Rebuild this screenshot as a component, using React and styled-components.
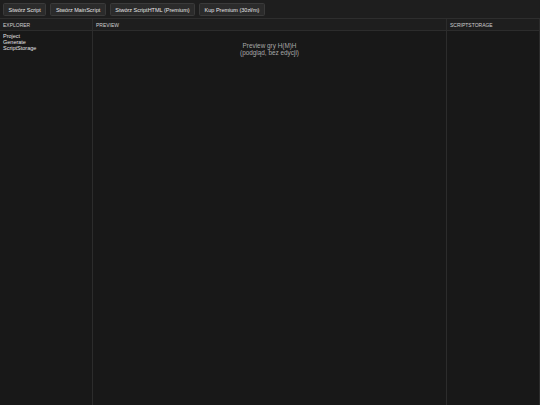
import React from "react"
import styled, { createGlobalStyle } from "styled-components"

const GlobalStyle = createGlobalStyle`
  html, body {
    margin: 0;
    padding: 0;
    background: #181818;
  }
  body {
    font-family: "Liberation Sans", Arial, sans-serif;
    color: #ddd;
  }
`

const Page = styled.div`
  display: flex;
  flex-direction: column;
  width: 540px;
  height: 405px;
  overflow: hidden;
`

const Toolbar = styled.div`
  display: flex;
  align-items: center;
  gap: 4px;
  height: 18px;
  padding: 0 3px;
  background: #1e1e1e;
  border-bottom: 1px solid #2e2e2e;
`

const ToolButton = styled.button`
  height: 13px;
  padding: 0 4.5px;
  margin-top: 1px;
  font-family: inherit;
  font-size: 5.5px;
  color: #e6e6e6;
  background: #2b2b2b;
  border: 1px solid #3a3a3a;
  border-radius: 1.5px;
  cursor: pointer;
`

const Workspace = styled.div`
  flex: 1;
  display: grid;
  grid-template-columns: 93px 1fr 93px;
  min-height: 0;
`

const Panel = styled.section`
  display: flex;
  flex-direction: column;
  background: #181818;
  border-right: 1px solid #2c2c2c;
  min-width: 0;
`

const PanelHeader = styled.div`
  height: 11px;
  display: flex;
  align-items: center;
  padding: 0 3px;
  font-size: 5px;
  color: #cfcfcf;
  text-transform: uppercase;
  background: #1e1e1e;
  border-bottom: 1px solid #2c2c2c;
`

const Tree = styled.ul`
  list-style: none;
  margin: 0;
  padding: 2px 3px;
  font-size: 5.5px;
  line-height: 6px;
  color: #e4e4e4;
`

const PreviewBody = styled.div`
  padding-top: 11px;
  text-align: center;
  font-size: 6.4px;
  line-height: 7px;
  color: #a8a8a8;
`

export default function App() {
  return (
    <Page>
      <GlobalStyle />
      <Toolbar>
        <ToolButton>Stwórz Script</ToolButton>
        <ToolButton>Stwórz MainScript</ToolButton>
        <ToolButton>Stwórz ScriptHTML (Premium)</ToolButton>
        <ToolButton>Kup Premium (30zł/m)</ToolButton>
      </Toolbar>
      <Workspace>
        <Panel>
          <PanelHeader>Explorer</PanelHeader>
          <Tree>
            <li>Project</li>
            <li>Generate</li>
            <li>ScriptStorage</li>
          </Tree>
        </Panel>
        <Panel>
          <PanelHeader>Preview</PanelHeader>
          <PreviewBody>
            Preview gry H(M)H
            <br />
            (podgląd, bez edycji)
          </PreviewBody>
        </Panel>
        <Panel>
          <PanelHeader>ScriptStorage</PanelHeader>
        </Panel>
      </Workspace>
    </Page>
  )
}
